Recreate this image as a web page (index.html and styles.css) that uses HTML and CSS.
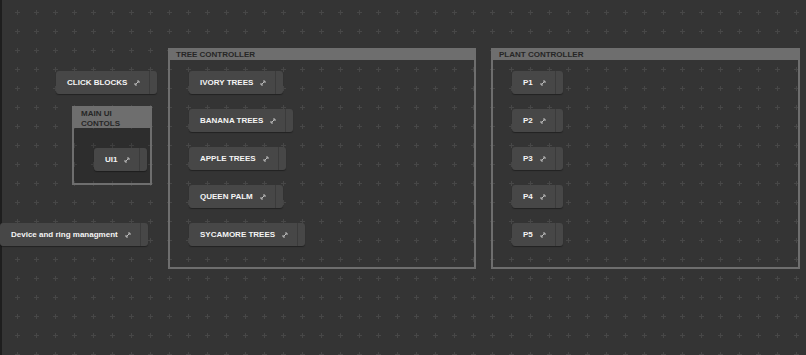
FILE: index.html
```html
<!DOCTYPE html>
<html lang="en">
<head>
  <meta charset="UTF-8" />
  <meta name="viewport" content="width=device-width, initial-scale=1.0"/>
  <title>Node canvas</title>
  <link rel="stylesheet" href="styles.css">
</head>
<body>
  <div class="canvas">
    <svg class="grid" width="100%" height="100%">
      <defs>
        <pattern id="plus" x="14" y="9" width="19" height="19" patternUnits="userSpaceOnUse">
          <path d="M1 3.5H6M3.5 1V6" stroke="#474747" stroke-width="1"/>
        </pattern>
      </defs>
      <rect width="100%" height="100%" fill="url(#plus)"/>
    </svg>
    <div class="edge"></div>

    <div class="node at-click"><span class="label">CLICK BLOCKS</span><svg class="ico" viewBox="0 0 6 6"><path d="M1.5 4.5L4.5 1.5M3 1H5V3M1 3V5H3"/></svg><span class="port"></span></div>

    <div class="group group-main">
      <div class="group-head">MAIN UI<br>CONTOLS</div>
      <div class="group-body">
        <div class="node"><span class="label">UI1</span><svg class="ico" viewBox="0 0 6 6"><path d="M1.5 4.5L4.5 1.5M3 1H5V3M1 3V5H3"/></svg><span class="port"></span></div>
      </div>
    </div>

    <div class="node at-device"><span class="label mixed">Device and ring managment</span><svg class="ico" viewBox="0 0 6 6"><path d="M1.5 4.5L4.5 1.5M3 1H5V3M1 3V5H3"/></svg><span class="port"></span></div>

    <div class="group group-tree">
      <div class="group-head">TREE CONTROLLER</div>
      <div class="group-body">
        <div class="node"><span class="label">IVORY TREES</span><svg class="ico" viewBox="0 0 6 6"><path d="M1.5 4.5L4.5 1.5M3 1H5V3M1 3V5H3"/></svg><span class="port"></span></div>
        <div class="node"><span class="label">BANANA TREES</span><svg class="ico" viewBox="0 0 6 6"><path d="M1.5 4.5L4.5 1.5M3 1H5V3M1 3V5H3"/></svg><span class="port"></span></div>
        <div class="node"><span class="label">APPLE TREES</span><svg class="ico" viewBox="0 0 6 6"><path d="M1.5 4.5L4.5 1.5M3 1H5V3M1 3V5H3"/></svg><span class="port"></span></div>
        <div class="node"><span class="label">QUEEN PALM</span><svg class="ico" viewBox="0 0 6 6"><path d="M1.5 4.5L4.5 1.5M3 1H5V3M1 3V5H3"/></svg><span class="port"></span></div>
        <div class="node"><span class="label">SYCAMORE TREES</span><svg class="ico" viewBox="0 0 6 6"><path d="M1.5 4.5L4.5 1.5M3 1H5V3M1 3V5H3"/></svg><span class="port"></span></div>
      </div>
    </div>

    <div class="group group-plant">
      <div class="group-head">PLANT CONTROLLER</div>
      <div class="group-body">
        <div class="node"><span class="label">P1</span><svg class="ico" viewBox="0 0 6 6"><path d="M1.5 4.5L4.5 1.5M3 1H5V3M1 3V5H3"/></svg><span class="port"></span></div>
        <div class="node"><span class="label">P2</span><svg class="ico" viewBox="0 0 6 6"><path d="M1.5 4.5L4.5 1.5M3 1H5V3M1 3V5H3"/></svg><span class="port"></span></div>
        <div class="node"><span class="label">P3</span><svg class="ico" viewBox="0 0 6 6"><path d="M1.5 4.5L4.5 1.5M3 1H5V3M1 3V5H3"/></svg><span class="port"></span></div>
        <div class="node"><span class="label">P4</span><svg class="ico" viewBox="0 0 6 6"><path d="M1.5 4.5L4.5 1.5M3 1H5V3M1 3V5H3"/></svg><span class="port"></span></div>
        <div class="node"><span class="label">P5</span><svg class="ico" viewBox="0 0 6 6"><path d="M1.5 4.5L4.5 1.5M3 1H5V3M1 3V5H3"/></svg><span class="port"></span></div>
      </div>
    </div>
  </div>
</body>
</html>
```

FILE: styles.css
```css
html, body {
  margin: 0;
  padding: 0;
  height: 100%;
  background: #343434;
  font-family: 'Liberation Sans', Arial, sans-serif;
  overflow: hidden;
}

.canvas {
  position: relative;
  width: 100%;
  height: 100%;
}

.grid {
  position: absolute;
  inset: 0;
}

.edge {
  position: absolute;
  left: 0;
  top: 0;
  bottom: 0;
  width: 2px;
  background: #1e1e1e;
}

.node {
  display: flex;
  align-items: center;
  width: max-content;
  height: 23px;
  padding-left: 11px;
  box-sizing: border-box;
  background: #474747;
  border-radius: 3px;
  box-shadow: 0 1px 1px rgba(0,0,0,0.35);
  color: #f4f4f4;
  font-size: 8px;
  font-weight: 700;
  z-index: 1;
}

.node .label {
  white-space: nowrap;
}

.node .ico {
  width: 6px;
  height: 6px;
  margin-left: 7px;
  fill: none;
  stroke: #bdbdbd;
  stroke-width: 1;
}

.node .port {
  align-self: stretch;
  width: 7px;
  margin-left: 9px;
  border-left: 1px solid #3b3b3b;
}

.at-click {
  position: absolute;
  left: 56px;
  top: 71px;
}

.at-device {
  position: absolute;
  left: 0;
  top: 223px;
}

.group {
  position: absolute;
  box-sizing: border-box;
  border: 2px solid #6e6e6e;
}

.group-head {
  background: #6e6e6e;
  color: #262626;
  font-size: 8px;
  font-weight: 700;
  line-height: 10px;
  height: 10px;
  padding-left: 6px;
}

.group-body {
  display: flex;
  flex-direction: column;
  gap: 15px;
  padding: 11px 0 0 19px;
}

.group-tree {
  left: 168px;
  top: 48px;
  width: 308px;
  height: 221px;
}

.group-plant {
  left: 491px;
  top: 48px;
  width: 309px;
  height: 221px;
}

.group-main {
  left: 72px;
  top: 106px;
  width: 80px;
  height: 79px;
  display: flex;
  flex-direction: column;
}

.group-main .group-head {
  height: auto;
  padding: 1px 0 0 7px;
  line-height: 9.5px;
  flex: 0 0 20px;
  box-sizing: border-box;
}

.group-main .group-body {
  flex: 1;
  padding: 20px 0 0 20px;
  background: rgba(0,0,0,0.12);
}
```
